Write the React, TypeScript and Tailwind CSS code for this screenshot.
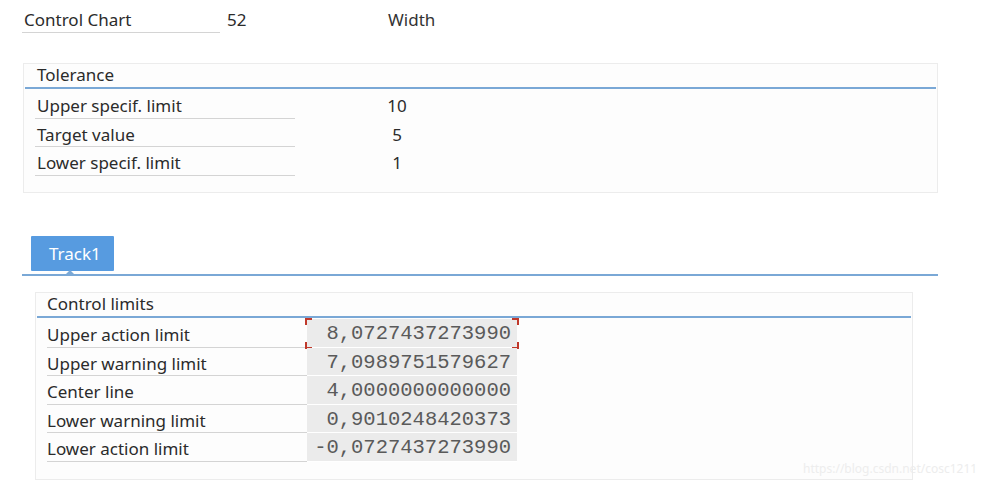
import React from "react";

const tol = [
  ["Upper specif. limit", "10"],
  ["Target value", "5"],
  ["Lower specif. limit", "1"],
];

const lim = [
  ["Upper action limit", "8,0727437273990"],
  ["Upper warning limit", "7,0989751579627"],
  ["Center line", "4,0000000000000"],
  ["Lower warning limit", "0,9010248420373"],
  ["Lower action limit", "-0,0727437273990"],
];

export default function App() {
  return (
    <div
      className="relative w-[994px] h-[504px] bg-white text-[#2b2b2b] overflow-hidden"
      style={{ fontFamily: '"Noto Sans", "Open Sans", Arial, sans-serif' }}
    >
      {/* top line */}
      <div className="flex items-start pt-[7px] pl-[22px] h-[63px]">
        <div className="w-[198px] h-[26px] border-b border-[#d4d4d4] pl-[2px] text-[17px] leading-[25px]">
          Control Chart
        </div>
        <div className="ml-[7px] w-[161px] text-[17px] leading-[25px]">52</div>
        <div className="text-[17px] leading-[25px] text-[#333]">Width</div>
      </div>

      {/* Tolerance box */}
      <div className="ml-[23px] w-[915px] h-[130px] border border-[#ececec] bg-[#fdfdfd]">
        <div className="h-[23px] pl-[13px] text-[17px] leading-[22px]">Tolerance</div>
        <div className="mx-[1px] h-[2px] bg-[#7aa8d6]" />
        <div className="pl-[11px] pt-[1px]">
          {tol.map(([l, v]) => (
            <div key={l} className="flex h-[28.7px]">
              <div className="w-[260px] border-b border-[#d4d4d4] pl-[2px] text-[17px] leading-[31px]">
                {l}
              </div>
              <div className="w-[40px] ml-[82px] text-center text-[17px] leading-[31px]">{v}</div>
            </div>
          ))}
        </div>
      </div>

      {/* Tabs */}
      <div className="mt-[43px] ml-[22px] w-[916px]">
        <div className="relative flex h-[41px] items-start">
          <div className="ml-[9px] w-[83px] h-[35px] bg-[#579be0] rounded-[1px] text-white text-[17px] leading-[35px] pl-[18px]">
            Track1
          </div>
          <div className="absolute left-0 right-0 bottom-[1px] h-[2px] bg-[#7aa8d6]" />
          <div className="absolute left-[44px] bottom-[3px] w-0 h-0 border-l-[4px] border-r-[4px] border-b-[4px] border-l-transparent border-r-transparent border-b-[#7aa8d6]" />
        </div>
      </div>

      {/* Control limits box */}
      <div className="mt-[15px] ml-[35px] w-[878px] h-[188px] border border-[#ececec] bg-[#fdfdfd]">
        <div className="h-[23px] pl-[11px] text-[17px] leading-[22px]">Control limits</div>
        <div className="mx-[1px] h-[2px] bg-[#7aa8d6]" />
        <div className="pl-[11px] pt-[1px]">
          {lim.map(([l, v], i) => (
            <div key={l} className="flex h-[28.5px]">
              <div className="w-[260px] border-b border-[#d4d4d4] text-[17px] leading-[32px]">{l}</div>
              <div className="relative w-[210px] h-[28.5px] border-b border-white bg-[#ebebeb] text-right pr-[6px] text-[20.5px] leading-[30px] text-[#5a5a5a]"
                style={{ fontFamily: '"Liberation Mono", "Courier New", monospace' }}>
                {v}
                {i === 0 && (
                  <>
                    <div className="absolute left-[-2px] top-[-1px] w-[7px] h-[7px] border-l-2 border-t-2 border-[#c0392b]" />
                    <div className="absolute right-[-2px] top-[-1px] w-[7px] h-[7px] border-r-2 border-t-2 border-[#c0392b]" />
                    <div className="absolute left-[-2px] bottom-[-2px] w-[7px] h-[7px] border-l-2 border-b-2 border-[#c0392b]" />
                    <div className="absolute right-[-2px] bottom-[-2px] w-[7px] h-[7px] border-r-2 border-b-2 border-[#c0392b]" />
                  </>
                )}
              </div>
            </div>
          ))}
        </div>
      </div>

      <div className="absolute left-[803px] top-[460px] text-[12px] text-[#ededed]">
        https://blog.csdn.net/cosc1211
      </div>
    </div>
  );
}
